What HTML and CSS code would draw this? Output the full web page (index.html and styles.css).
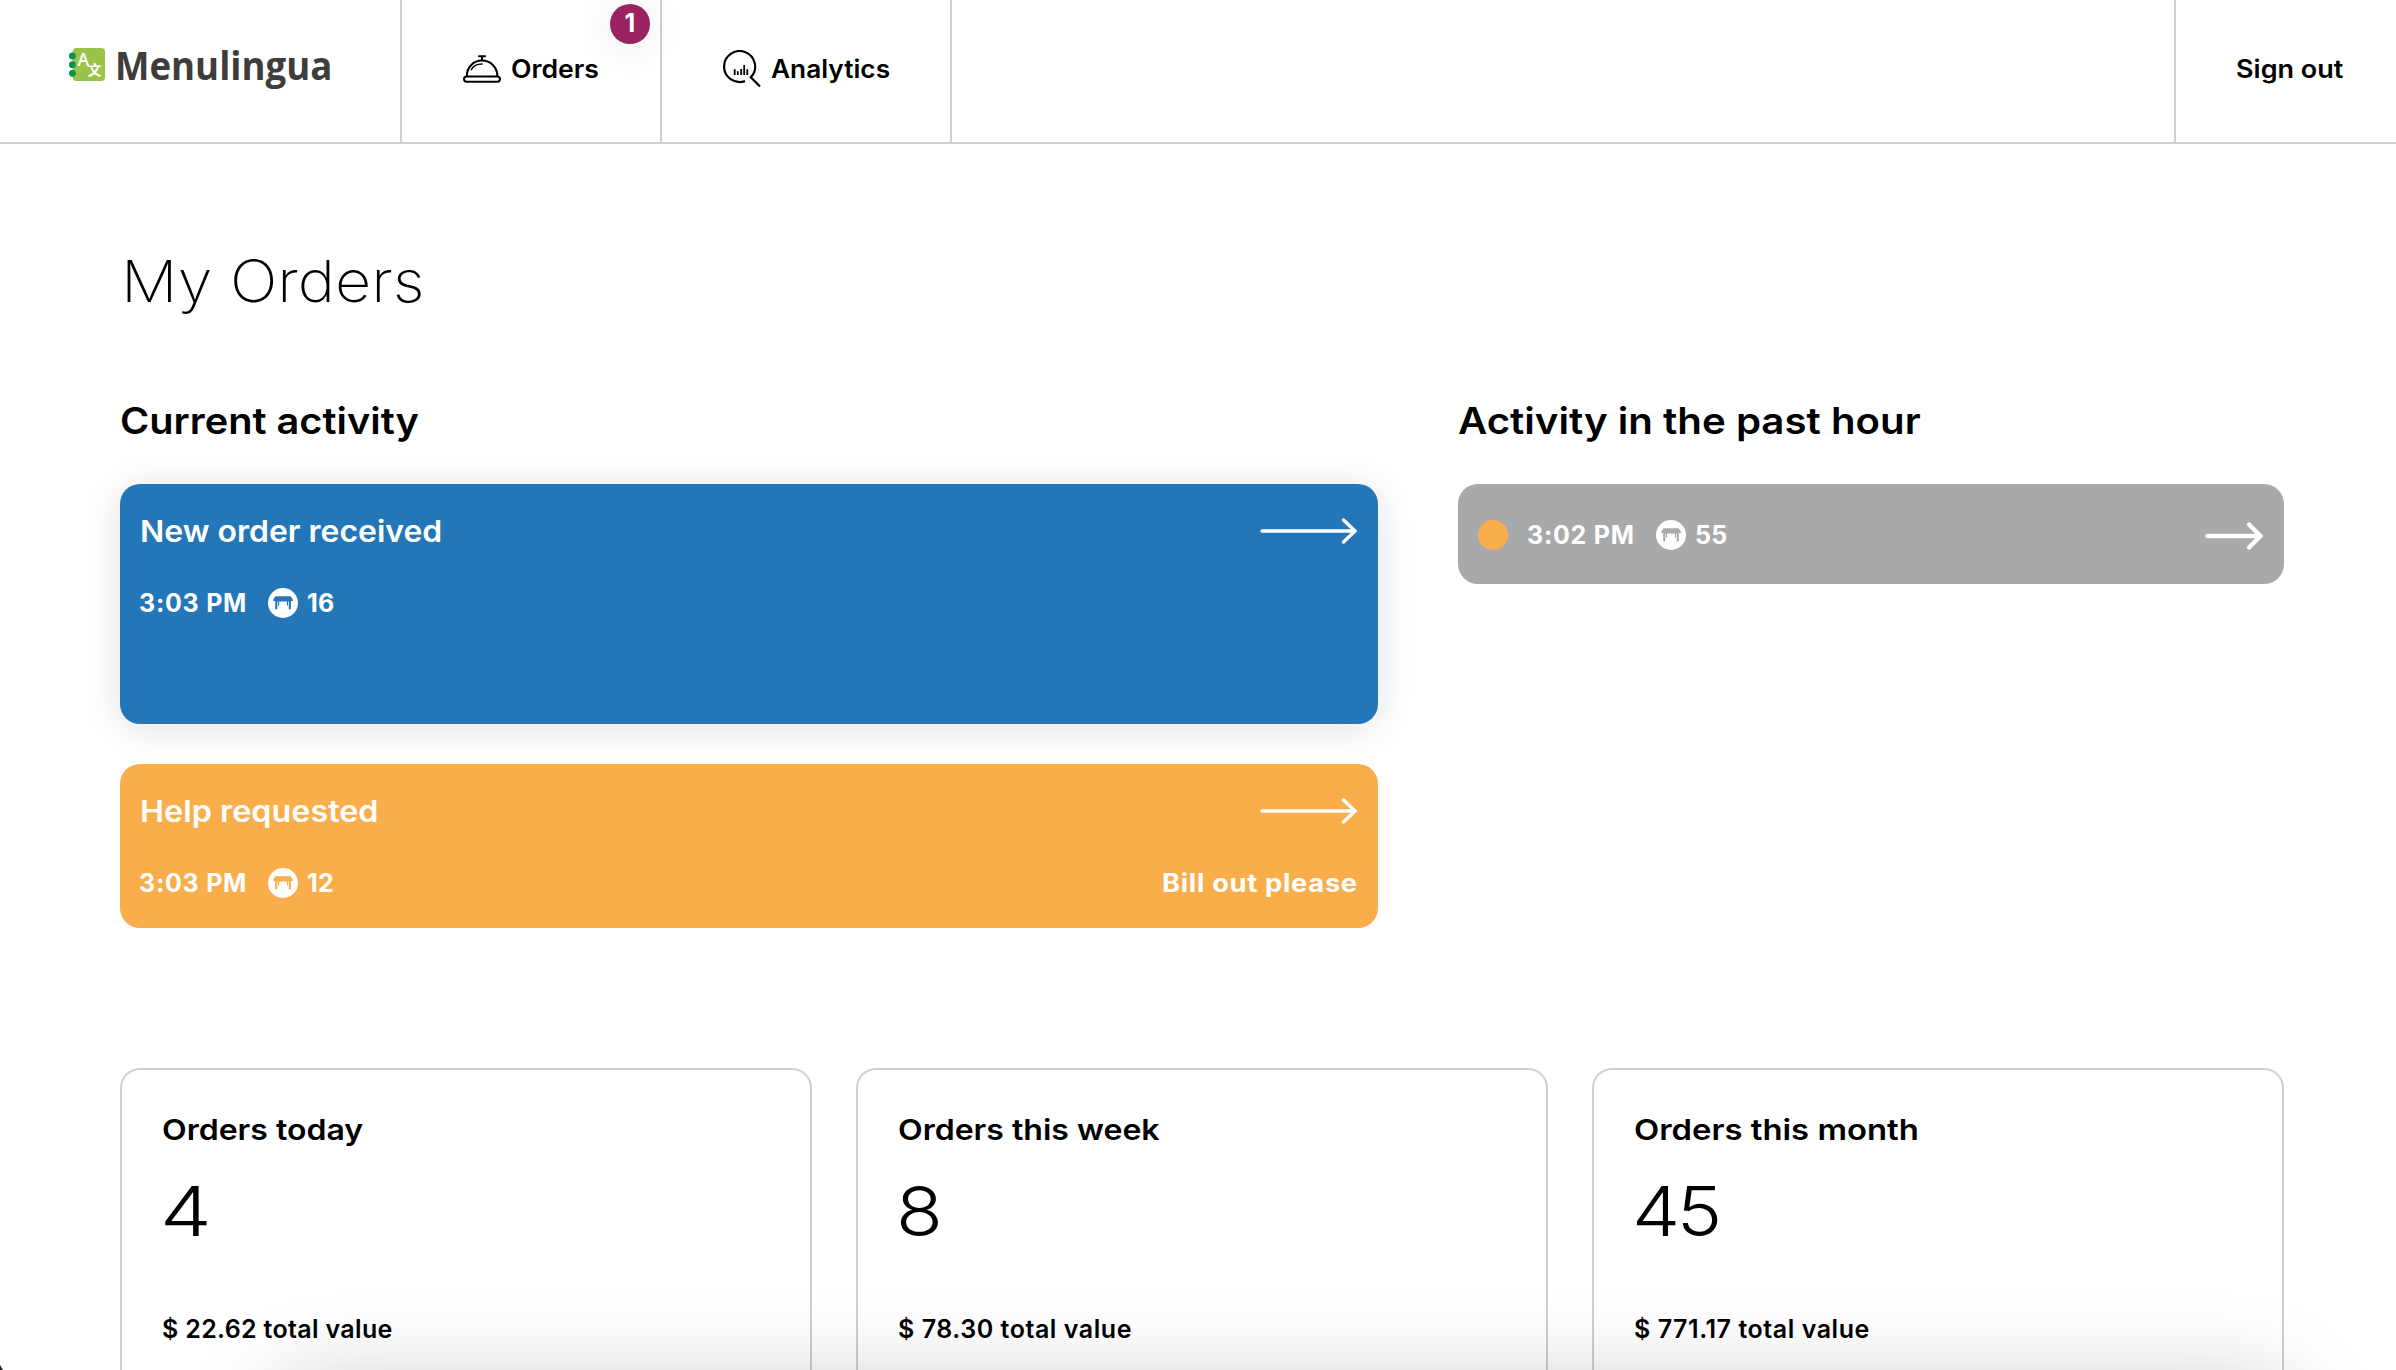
FILE: index.html
```
<!DOCTYPE html>
<html lang="en">
<head>
<meta charset="utf-8">
<title>Menulingua – My Orders</title>
<link rel="stylesheet" href="styles.css">
</head>
<body>
<svg class="defs" width="0" height="0" aria-hidden="true">
  <symbol id="arrow-long" viewBox="0 0 98 28"><path d="M2 14H95" stroke-width="3.4"/><path d="M83.5 3L95 14L83.5 25" stroke-width="3.4"/></symbol>
  <symbol id="arrow-short" viewBox="0 0 60 30"><path d="M3.5 15H56" stroke-width="4.6"/><path d="M45 3.5L56.5 15L45 26.5" stroke-width="4.4"/></symbol>
  <symbol id="table" viewBox="0 0 30 30"><circle cx="15" cy="15" r="15" fill="#fff"/><path fill="currentColor" d="M7.5 8.2H22.5L24.8 11.2V13H22.9V21.2H20.8V13.4H20V17.6H18.9V13.4H11.1V17.6H10V13.4H9.3V21.2H7.2V13H5.4V11.2Z"/></symbol>
</svg>

<header class="topbar">
  <a class="brand">
    <svg class="brand-mark" width="37" height="34" viewBox="0 0 37 34">
      <rect x="3.6" y="0" width="32.4" height="33" rx="4" fill="#9ac34a"/>
      <g fill="#0c9247"><circle cx="3.4" cy="8" r="3.4"/><circle cx="3.4" cy="16.7" r="3.4"/><circle cx="3.4" cy="25.3" r="3.4"/></g>
      <text class="mark-latin" x="8.6" y="17.8">A</text>
      <text class="mark-han" x="18.4" y="26.6">文</text>
    </svg>
    <span class="brand-name">Menulingua</span>
  </a>
  <nav class="nav">
    <a class="nav-item nav-orders">
      <svg width="38" height="28" viewBox="0 0 38 28" fill="none" stroke="#000" stroke-width="2" stroke-linecap="round">
        <path d="M16 1.2H22M19 1.2V5"/><path d="M3.8 21C4 12 10.5 5.6 19 5.6S34.2 12 34.4 21"/><path d="M8.3 14.8C10 11.2 14 8.9 19 8.9" stroke-width="1.5"/>
        <rect x="1" y="21.4" width="36" height="5.4" rx="2.7"/>
      </svg>
      <span class="label">Orders</span>
      <b class="badge">1</b>
    </a>
    <a class="nav-item nav-analytics">
      <svg width="38" height="38" viewBox="0 0 38 38" fill="none" stroke="#000" stroke-width="2.2">
        <path d="M22 31.1A15.5 15.5 0 1 1 27.8 27.3L37 36.6" /><path d="M11.7 19.3V25M14.8 21.3V25M18.2 19V25M21.2 15V25M24.3 19.3V25" stroke-width="1.8"/>
      </svg>
      <span class="label">Analytics</span>
    </a>
  </nav>
  <a class="signout"><span class="label">Sign out</span></a>
</header>

<main class="page">
  <h1>My Orders</h1>
  <div class="activity">
    <section class="current">
      <h2>Current activity</h2>
      <article class="card card-new">
        <div class="card-row">
          <h3 class="new-title">New order received</h3>
          <svg class="arrow" width="98" height="28"><use href="#arrow-long"/></svg>
        </div>
        <div class="meta">
          <span class="time">3:03 PM</span><svg class="table-icon" width="30" height="30"><use href="#table"/></svg><span class="table-no">16</span>
        </div>
      </article>
      <article class="card card-help">
        <div class="card-row">
          <h3>Help requested</h3>
          <svg class="arrow" width="98" height="28"><use href="#arrow-long"/></svg>
        </div>
        <div class="meta">
          <span class="time">3:03 PM</span><svg class="table-icon" width="30" height="30"><use href="#table"/></svg><span class="table-no">12</span>
          <span class="note">Bill out please</span>
        </div>
      </article>
    </section>
    <section class="past">
      <h2>Activity in the past hour</h2>
      <article class="past-card">
        <i class="dot"></i><span class="time">3:02 PM</span><svg class="table-icon" width="30" height="30"><use href="#table"/></svg><span class="table-no">55</span>
        <svg class="arrow past-arrow" width="60" height="30"><use href="#arrow-short"/></svg>
      </article>
    </section>
  </div>
  <div class="stats">
    <section class="stat"><h4>Orders today</h4><p class="count count-today">4</p><p class="value value-today">$ 22.62 total value</p></section>
    <section class="stat"><h4>Orders this week</h4><p class="count">8</p><p class="value">$ 78.30 total value</p></section>
    <section class="stat"><h4 class="month">Orders this month</h4><p class="count">45</p><p class="value">$ 771.17 total value</p></section>
  </div>
</main>
<div class="bottom-shade"></div>
<div class="window-corner"></div>
</body>
</html>
```
FILE: styles.css
```
* { box-sizing: border-box; margin: 0; }

body {
  position: relative;
  height: 1370px;
  overflow: hidden;
  background: #fff;
  color: #000;
  font-family: Inter, "Liberation Sans", sans-serif;
}

.defs { position: absolute; }

/* Headings and labels are set slightly extended */
h1, h2, h3, h4, .label, .count, .brand-name { transform-origin: left; }

/* Top bar */
.topbar {
  display: flex;
  height: 144px;
  border-bottom: 2px solid #d0d0d0;
  font-size: 25px;
  font-weight: 600;
}

.brand {
  display: flex;
  align-items: center;
  width: 402px;
  padding: 0 0 13px 69px;
  border-right: 2px solid #d0d0d0;
}
.brand-mark { flex: none; }
.brand-name {
  margin-left: 9px;
  color: #3d3d3c;
  font: 700 40px/48px "Open Sans", sans-serif;
  transform: scaleX(.914);
}
.mark-latin { fill: #fff; font: 600 17.5px "Open Sans", sans-serif; }
.mark-han { fill: #fff; font: 700 14px "Noto Sans CJK SC", sans-serif; }

.nav { display: flex; }
.nav-item {
  position: relative;
  display: flex;
  align-items: center;
  gap: 10px;
  padding: 0 0 5px 61px;
  border-right: 2px solid #d0d0d0;
}
.nav-orders { width: 260px; }
.nav-orders .label { transform: scaleX(1.065); }
.nav-analytics { width: 290px; }
.nav-analytics .label { transform: scaleX(1.05); }
.badge {
  position: absolute;
  top: 4px;
  right: 10px;
  width: 40px;
  height: 40px;
  border-radius: 50%;
  background: #9b2362;
  box-shadow: 0 4px 40px rgba(0, 0, 0, .1);
  color: #fff;
  font-size: 25px;
  font-weight: 700;
  line-height: 38px;
  text-align: center;
}
.signout {
  display: flex;
  align-items: center;
  width: 222px;
  margin-left: auto;
  padding: 0 0 5px 60px;
  border-left: 2px solid #d0d0d0;
}
.signout .label { transform: scaleX(1.08); }

/* Page */
.page { padding: 102px 112px 0 120px; }
h1 {
  padding-left: 1px;
  font-size: 58px;
  font-weight: 200;
  line-height: 70px;
  transform: scaleX(1.085);
}
h2 {
  margin-bottom: 41px;
  font-size: 37px;
  font-weight: 600;
  line-height: 45px;
  transform: scaleX(1.074);
}
.past h2 { transform: scaleX(1.087); }

.activity {
  display: grid;
  grid-template-columns: 1258px 826px;
  gap: 80px;
  margin-top: 82px;
}

.card {
  padding: 29px 20px 30px;
  border-radius: 20px;
  color: #fff;
}
.card-new {
  height: 240px;
  margin-bottom: 40px;
  background: #2377b8;
  box-shadow: 0 4px 40px rgba(0, 0, 0, .12);
}
.card-help { position: relative; background: #faae4b; }
.card-row {
  display: flex;
  align-items: center;
  justify-content: space-between;
  height: 36px;
  margin-bottom: 39px;
}
h3 { font-size: 30px; font-weight: 600; line-height: 36px; transform: scaleX(1.078); }
.new-title { transform: scaleX(1.065); }
.arrow { fill: none; stroke: #fff; stroke-linecap: round; stroke-linejoin: round; }

.meta, .past-card {
  display: flex;
  font-size: 25px;
  font-weight: 700;
  line-height: 30px;
}
.time { width: 128px; letter-spacing: .75px; text-indent: -1px; }
.table-icon { margin-right: 9px; }
.table-no { letter-spacing: .2px; }
.card-new .table-icon { color: #2377b8; }
.card-help .table-icon { color: #faae4b; }
.note {
  margin-left: auto;
  letter-spacing: .6px;
  transform: scaleX(1.095);
  transform-origin: right;
}

.past-card {
  height: 100px;
  padding: 36px 20px 0;
  border-radius: 20px;
  background: #a7a9ab;
  color: #fff;
}
.past-card .table-icon { color: #a7a9ab; }
.dot {
  width: 30px;
  height: 30px;
  margin-right: 20px;
  border-radius: 50%;
  background: #faae4b;
}
.past-arrow { margin: 1px 0 0 auto; }

/* Totals */
.stats {
  display: grid;
  grid-template-columns: repeat(3, 692px);
  gap: 44px;
  margin-top: 140px;
}
.stat {
  height: 302px;
  padding: 42px 40px 0;
  border: 2px solid #d0d0d0;
  border-bottom: 0;
  border-radius: 20px 20px 0 0;
}
h4 { font-size: 29px; font-weight: 600; line-height: 36px; transform: scaleX(1.105); }
.month { transform: scaleX(1.132); }
.count {
  margin: 23px 0 63px -2px;
  font-size: 69px;
  font-weight: 350;
  line-height: 80px;
  letter-spacing: -3px;
  transform: scaleX(1.11);
}
.count-today { transform: scaleX(1.19); }
.value { font-size: 25px; font-weight: 600; line-height: 30px; letter-spacing: .55px; }
.value-today { letter-spacing: .34px; }

/* Soft shadow rising from below the fold */
.bottom-shade {
  position: absolute;
  top: 1390px;
  left: 280px;
  width: 2005px;
  height: 300px;
  box-shadow: 0 0 92px rgba(0, 0, 0, .23);
  pointer-events: none;
}

.window-corner {
  position: absolute;
  bottom: 0;
  left: 0;
  width: 3px;
  height: 5px;
  background: #222;
  clip-path: polygon(0 0, 100% 100%, 0 100%);
}
```
